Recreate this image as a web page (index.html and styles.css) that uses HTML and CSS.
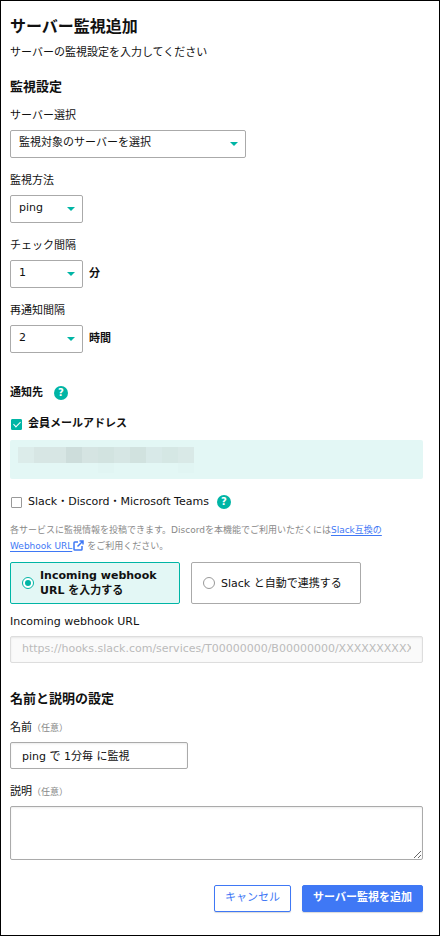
FILE: index.html
```html
<!DOCTYPE html>
<html lang="ja">
<head>
    <meta charset="UTF-8">
    <meta name="viewport" content="width=device-width, initial-scale=1.0">
    <title>サーバー監視追加</title>
    <link rel="stylesheet" href="styles.css">
</head>
<body>
    <form class="panel">
        <h1>サーバー監視追加</h1>
        <p class="lead">サーバーの監視設定を入力してください</p>

        <h2>監視設定</h2>
        <div class="field">
            <label for="server">サーバー選択</label>
            <div class="row">
                <div class="select select-wide">
                    <select id="server"><option>監視対象のサーバーを選択</option></select>
                </div>
            </div>
        </div>
        <div class="field">
            <label for="method">監視方法</label>
            <div class="row">
                <div class="select">
                    <select id="method"><option>ping</option></select>
                </div>
            </div>
        </div>
        <div class="field">
            <label for="interval">チェック間隔</label>
            <div class="row">
                <div class="select">
                    <select id="interval"><option>1</option></select>
                </div>
                <span class="unit">分</span>
            </div>
        </div>
        <div class="field">
            <label for="renotify">再通知間隔</label>
            <div class="row">
                <div class="select">
                    <select id="renotify"><option>2</option></select>
                </div>
                <span class="unit">時間</span>
            </div>
        </div>

        <div class="notify-head">
            <h3>通知先</h3>
            <button type="button" class="help" aria-label="ヘルプ">?</button>
        </div>

        <div class="check">
            <input type="checkbox" id="mail" checked>
            <label for="mail" class="bold">会員メールアドレス</label>
        </div>
        <div class="mail-box">
            <svg class="mosaic" width="176" height="26" viewBox="0 0 176 26" shape-rendering="crispEdges" aria-hidden="true">
                <path fill="#dcecea" d="M0 0h16v16H0z"/>
                <path fill="#d7e6e4" d="M16 0h32v16H16z"/>
                <path fill="#cddddb" d="M48 0h16v16H48z"/>
                <path fill="#d5e4e2" d="M64 0h16v16H64z"/>
                <path fill="#d2e3e0" d="M80 0h16v16H80z"/>
                <path fill="#d6e6e4" d="M96 0h16v16H96z"/>
                <path fill="#d1e2df" d="M112 0h16v16h-16z"/>
                <path fill="#d8e9e8" d="M128 0h16v16h-16z"/>
                <path fill="#d5e7e4" d="M144 0h16v16h-16z"/>
                <path fill="#d9e9e7" d="M160 0h16v16h-16z"/>
                <path fill="#e1f5f3" d="M80 16h16v10H80zM160 16h16v10h-16z"/>
            </svg>
        </div>

        <div class="check">
            <input type="checkbox" id="chat">
            <label for="chat">Slack・Discord・Microsoft Teams</label>
            <button type="button" class="help" aria-label="ヘルプ">?</button>
        </div>
        <p class="note">各サービスに監視情報を投稿できます。Discordを本機能でご利用いただくには<a href="#">Slack互換の<br>Webhook URL</a><svg class="external" width="11" height="11" viewBox="0 0 11 11" fill="none" stroke="#3f78f5" stroke-width="1.5" aria-hidden="true"><path d="M5 2H1.8Q1 2 1 2.8V9.200Q1 10 1.800 10H8.200Q9 10 9 9.200V6M6.500 1H10V4.500M10 1L4.500 6.500"/></svg> をご利用ください。</p>

        <div class="cards">
            <label class="card selected">
                <input type="radio" name="hook" checked>
                <span>Incoming webhook URL を入力する</span>
            </label>
            <label class="card">
                <input type="radio" name="hook">
                <span>Slack と自動で連携する</span>
            </label>
        </div>

        <div class="field">
            <label for="url">Incoming webhook URL</label>
            <input type="text" id="url" placeholder="https://hooks.slack.com/services/T00000000/B00000000/XXXXXXXXXXXXXXXXXXXXXXXX" disabled>
        </div>

        <h2 class="section">名前と説明の設定</h2>
        <div class="field">
            <label for="name">名前<small>（任意）</small></label>
            <input type="text" id="name" class="name" value="ping で 1分毎 に監視">
        </div>
        <div class="field">
            <label for="desc">説明<small>（任意）</small></label>
            <textarea id="desc"></textarea>
        </div>

        <div class="actions">
            <button type="button" class="btn">キャンセル</button>
            <button type="submit" class="btn btn-primary">サーバー監視を追加</button>
        </div>
    </form>
</body>
</html>
```
FILE: styles.css
```css
* {
    box-sizing: border-box;
    margin: 0;
    padding: 0;
}
body {
    font-family: "DejaVu Sans", "Noto Sans CJK JP", sans-serif;
    font-size: 11px;
    line-height: 16px;
    color: #111;
    background: #fff;
}
input, select, textarea, button {
    font: inherit;
    color: inherit;
}
.panel {
    min-height: 100vh;
    border: 1px solid #000;
    padding: 14px 16px 22px 9px;
}
h1 {
    font-size: 16px;
    line-height: 24px;
    font-weight: bold;
    margin-bottom: 6px;
}
h2 {
    font-size: 13px;
    line-height: 20px;
    font-weight: bold;
    margin: 16px 0 11px;
}
h2.section {
    margin-top: 26px;
    margin-bottom: 11px;
}
h3 {
    font-size: 11px;
    font-weight: bold;
}

/* fields */
.field {
    margin-bottom: 15px;
}
.field > label {
    display: block;
    margin-bottom: 6px;
}
small {
    font-size: 9px;
    color: #888;
}
.row {
    display: flex;
    align-items: center;
    gap: 6px;
}
.unit, .bold {
    font-weight: bold;
}
.select {
    position: relative;
    width: 73px;
}
.select-wide {
    width: 236px;
}
.select::after {
    content: "";
    position: absolute;
    right: 8px;
    top: 12px;
    border: 4px solid transparent;
    border-top-color: #00b5a5;
    border-bottom: 0;
    pointer-events: none;
}
select {
    appearance: none;
    display: block;
    width: 100%;
    height: 28px;
    padding: 0 20px 3px 8px;
    border: 1px solid #aaa;
    border-radius: 2px;
    background: #fff;
}
input[type="text"], textarea {
    display: block;
    width: 100%;
    height: 27px;
    padding: 0 11px 2px;
    border: 1px solid #aaa;
    border-radius: 2px;
    background: #fff;
    box-shadow: inset 0 1px 2px rgba(0, 0, 0, 0.08);
}
input[type="text"].name {
    width: 178px;
}
input[type="text"]:disabled {
    border-color: #ddd;
    background: #fafafa;
}
input::placeholder {
    color: #bbb;
}
textarea {
    height: 54px;
}

/* checkboxes */
.notify-head {
    display: flex;
    align-items: center;
    gap: 11px;
    margin: 32px 0 15px;
}
.help {
    width: 14px;
    height: 14px;
    border: 0;
    border-radius: 50%;
    background: #00b5a5;
    color: #fff;
    font-size: 10px;
    font-weight: bold;
    line-height: 14px;
}
.check {
    display: flex;
    align-items: center;
    padding-left: 1px;
}
.check label {
    margin-left: 6px;
}
.check .help {
    margin-left: 8px;
}
input[type="checkbox"] {
    appearance: none;
    display: flex;
    justify-content: center;
    width: 11px;
    height: 11px;
    border: 1px solid #999;
    border-radius: 1px;
    background: #fff;
}
input[type="checkbox"]:checked {
    border-color: #00b5a5;
    background: #00b5a5;
}
input[type="checkbox"]:checked::before {
    content: "";
    width: 3px;
    height: 6px;
    border: solid #fff;
    border-width: 0 1px 1px 0;
    transform: rotate(45deg);
}
.mail-box {
    height: 39px;
    margin: 8px 0 15px;
    padding: 7px 8px;
    border-radius: 2px;
    background: #e3f7f5;
}
.mosaic {
    display: block;
}
.note {
    margin: 12px 0 8px;
    font-size: 9px;
    line-height: 16px;
    color: #888;
}
.note a {
    color: #3f78f5;
    text-underline-offset: 2px;
}
.external {
    margin-left: 1px;
    vertical-align: -2px;
}

/* webhook type */
.cards {
    display: flex;
    gap: 11px;
    margin-bottom: 10px;
}
.card {
    display: flex;
    align-items: center;
    gap: 6px;
    width: 170px;
    height: 42px;
    padding: 0 11px;
    border: 1px solid #aaa;
    border-radius: 2px;
    line-height: 15px;
}
.card.selected {
    border-color: #00b5a5;
    background: #e3f7f5;
    font-weight: bold;
}
input[type="radio"] {
    appearance: none;
    flex: none;
    display: grid;
    place-items: center;
    width: 12px;
    height: 12px;
    border: 1px solid #999;
    border-radius: 50%;
    background: #fff;
}
input[type="radio"]:checked {
    border-color: #00b5a5;
}
input[type="radio"]:checked::before {
    content: "";
    width: 6px;
    height: 6px;
    border-radius: 50%;
    background: #00b5a5;
}

/* buttons */
.actions {
    display: flex;
    justify-content: flex-end;
    gap: 11px;
    margin-top: 25px;
}
.btn {
    height: 27px;
    padding: 0 10px 2px;
    border: 1px solid #3f78f5;
    border-radius: 2px;
    background: #fff;
    color: #3f78f5;
    box-shadow: 0 1px 1px rgba(0, 0, 0, 0.15);
}
.btn-primary {
    background: #3f78f5;
    color: #fff;
    font-weight: bold;
}
```
